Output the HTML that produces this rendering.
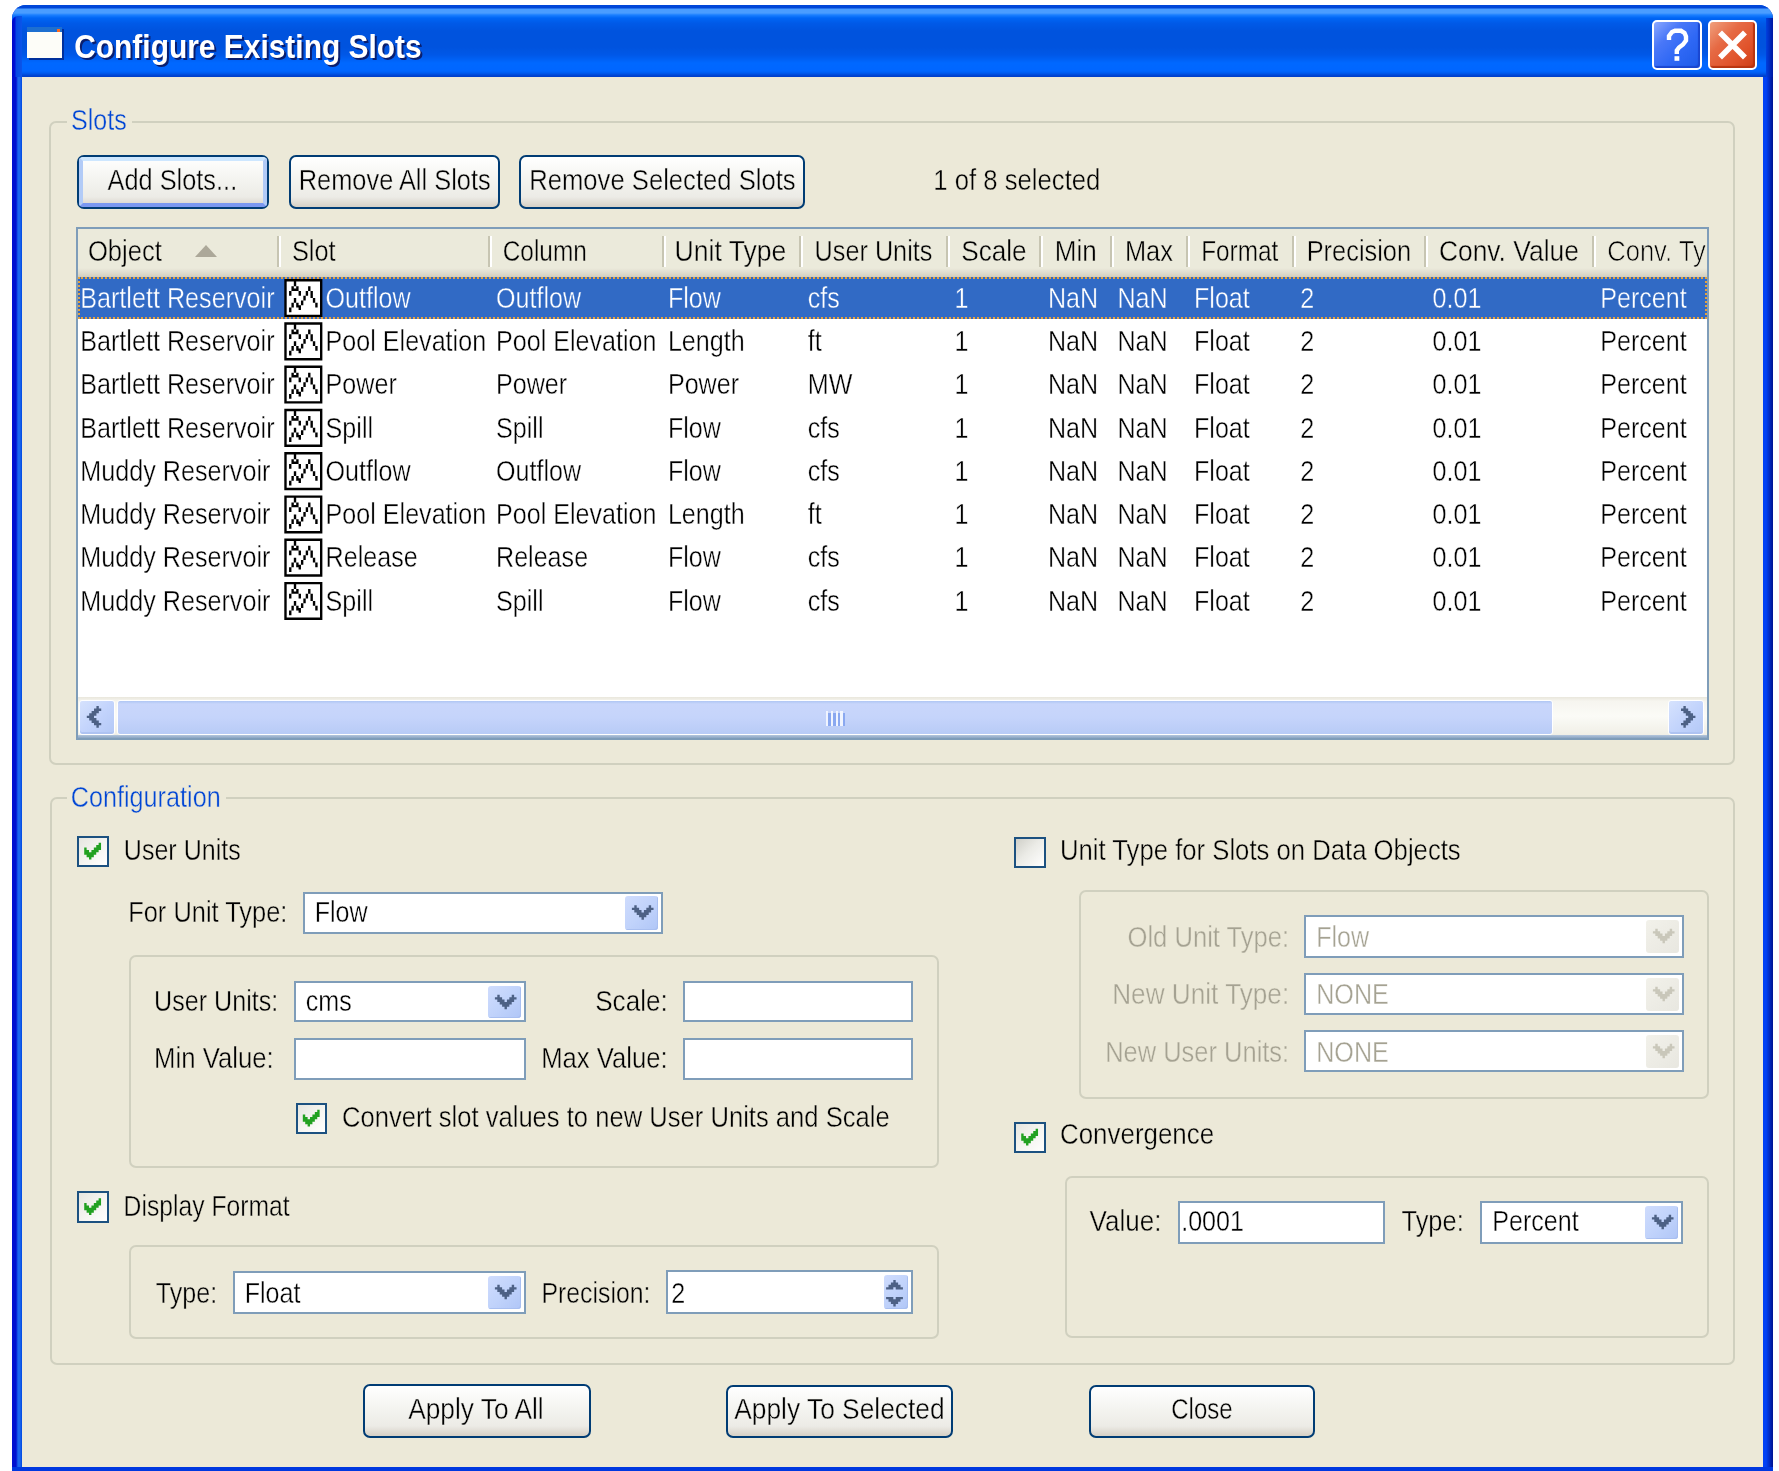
<!DOCTYPE html>
<html><head><meta charset="utf-8"><title>Configure Existing Slots</title>
<style>
html,body{margin:0;padding:0;background:#fff;width:1779px;height:1471px;overflow:hidden;position:relative;font-family:"Liberation Sans", sans-serif}
svg.ov{position:absolute;left:0;top:0;width:1779px;height:1471px;pointer-events:none}
svg.ov text{font-family:"Liberation Sans", sans-serif}
#wrap{position:absolute;left:0;top:0;width:1779px;height:1471px;filter:contrast(1)}
</style></head><body><div id="wrap">
<div style="position:absolute;left:12.0px;top:5.0px;width:1761.0px;height:1495.0px;background:linear-gradient(90deg,#0010d0 0,#0010d0 4px,#1a66ee 6px,#1a66ee 8px,#0048e0 10px,#0048e0 1751px,#0041f5 1751px,#0041f5 1754px,#00138f 1761px);border-radius:14px 14px 0 0;overflow:hidden"></div>
<div style="position:absolute;left:12.0px;top:5.0px;width:1761.0px;height:72.0px;background:linear-gradient(180deg,#0047d8 0px,#0047d8 3px,#4a9dff 4px,#4a9dff 8px,#1a7fff 10px,#0066f5 13px,#005ae8 18px,#0053de 26px,#0053de 42px,#0058e8 50px,#0068ff 58px,#0066ff 66px,#005cf0 68px,#0040cc 71px,#0040cc 72px);border-radius:14px 14px 0 0"></div>
<div style="position:absolute;left:12.0px;top:16.0px;width:10.0px;height:61.0px;background:linear-gradient(90deg,#0008c8 0,#0010d8 3px,#0648e0 4px,#0a55ea 10px);border-top-left-radius:6px"></div>
<div style="position:absolute;left:1766.0px;top:18.0px;width:7.0px;height:59.0px;background:linear-gradient(90deg,#0040e0,#0018a0)"></div>
<div style="position:absolute;left:22.0px;top:77.0px;width:1741.0px;height:1390.0px;background:#ece9d8"></div>
<div style="position:absolute;left:12.0px;top:1467.0px;width:1761.0px;height:4.0px;background:#0038e0"></div>
<div style="position:absolute;left:27.0px;top:27.0px;width:35.0px;height:31.0px;background:#fdfdf8;box-shadow:2px 2px 0 #00309c"></div>
<div style="position:absolute;left:27.0px;top:27.0px;width:35.0px;height:5.0px;background:#1d6fd0"></div>
<div style="position:absolute;left:57.0px;top:29.0px;width:3.0px;height:3.0px;background:#ff6a20"></div>
<div style="position:absolute;left:1652.0px;top:20.0px;width:50.0px;height:50.0px;border:2.4px solid #fff;border-radius:5px;box-sizing:border-box;background:linear-gradient(135deg,#8aa8ff 0%,#4a78f8 30%,#2f68f5 60%,#1d5ae8 100%);box-shadow:inset -2px -2px 1px #1a46d0"></div>
<div style="position:absolute;left:1708.0px;top:20.0px;width:49.0px;height:50.0px;border:2.4px solid #fff;border-radius:5px;box-sizing:border-box;background:linear-gradient(135deg,#f0a07e 0%,#e66a44 35%,#e0522a 70%,#cc3d14 100%);box-shadow:inset -2px -2px 1px #b83510"></div>
<div style="position:absolute;left:49.0px;top:121.0px;width:1686.0px;height:644.0px;border:2px solid #d0d0bf;border-radius:7px;box-sizing:border-box"></div>
<div style="position:absolute;left:66.7px;top:118.0px;width:65.3px;height:7.0px;background:#ece9d8"></div>
<div style="position:absolute;left:50.0px;top:797.0px;width:1685.0px;height:568.0px;border:2px solid #d0d0bf;border-radius:7px;box-sizing:border-box"></div>
<div style="position:absolute;left:66.5px;top:794.0px;width:159.5px;height:7.0px;background:#ece9d8"></div>
<div style="position:absolute;left:77.0px;top:155.0px;width:192.0px;height:54.0px;border:2.4px solid #003c74;border-radius:7px;box-sizing:border-box;background:linear-gradient(180deg,#ffffff 0%,#f4f4f0 45%,#ecebe6 80%,#d6d0c5 100%)"></div>
<div style="position:absolute;left:79.4px;top:157.4px;width:187.2px;height:49.2px;border:4px solid;border-color:#cee7ff #b2cbf7 #7b98f0 #b2cbf7;border-radius:4px;box-sizing:border-box"></div>
<div style="position:absolute;left:289.0px;top:155.0px;width:211.0px;height:54.0px;border:2.4px solid #003c74;border-radius:7px;box-sizing:border-box;background:linear-gradient(180deg,#ffffff 0%,#f4f4f0 45%,#ecebe6 80%,#d6d0c5 100%)"></div>
<div style="position:absolute;left:519.0px;top:155.0px;width:286.0px;height:54.0px;border:2.4px solid #003c74;border-radius:7px;box-sizing:border-box;background:linear-gradient(180deg,#ffffff 0%,#f4f4f0 45%,#ecebe6 80%,#d6d0c5 100%)"></div>
<div style="position:absolute;left:76.0px;top:227.0px;width:1633.0px;height:513.0px;border:2.4px solid #7f9db9;box-sizing:border-box;background:#fff"></div>
<div style="position:absolute;left:78.4px;top:229.4px;width:1628.2px;height:47.6px;background:linear-gradient(180deg,#ebeadb 0,#ebeadb 39px,#e4e1d3 42px,#dcd8c9 45px,#d2cebf 47.6px)"></div>
<div style="position:absolute;left:276.7px;top:236.0px;width:2.0px;height:31.0px;background:#c7c5b2"></div>
<div style="position:absolute;left:278.7px;top:236.0px;width:2.2px;height:31.0px;background:#fff"></div>
<div style="position:absolute;left:488.0px;top:236.0px;width:2.0px;height:31.0px;background:#c7c5b2"></div>
<div style="position:absolute;left:490.0px;top:236.0px;width:2.2px;height:31.0px;background:#fff"></div>
<div style="position:absolute;left:661.6px;top:236.0px;width:2.0px;height:31.0px;background:#c7c5b2"></div>
<div style="position:absolute;left:663.6px;top:236.0px;width:2.2px;height:31.0px;background:#fff"></div>
<div style="position:absolute;left:799.2px;top:236.0px;width:2.0px;height:31.0px;background:#c7c5b2"></div>
<div style="position:absolute;left:801.2px;top:236.0px;width:2.2px;height:31.0px;background:#fff"></div>
<div style="position:absolute;left:945.6px;top:236.0px;width:2.0px;height:31.0px;background:#c7c5b2"></div>
<div style="position:absolute;left:947.6px;top:236.0px;width:2.2px;height:31.0px;background:#fff"></div>
<div style="position:absolute;left:1039.3px;top:236.0px;width:2.0px;height:31.0px;background:#c7c5b2"></div>
<div style="position:absolute;left:1041.3px;top:236.0px;width:2.2px;height:31.0px;background:#fff"></div>
<div style="position:absolute;left:1109.5px;top:236.0px;width:2.0px;height:31.0px;background:#c7c5b2"></div>
<div style="position:absolute;left:1111.5px;top:236.0px;width:2.2px;height:31.0px;background:#fff"></div>
<div style="position:absolute;left:1186.0px;top:236.0px;width:2.0px;height:31.0px;background:#c7c5b2"></div>
<div style="position:absolute;left:1188.0px;top:236.0px;width:2.2px;height:31.0px;background:#fff"></div>
<div style="position:absolute;left:1292.0px;top:236.0px;width:2.0px;height:31.0px;background:#c7c5b2"></div>
<div style="position:absolute;left:1294.0px;top:236.0px;width:2.2px;height:31.0px;background:#fff"></div>
<div style="position:absolute;left:1424.0px;top:236.0px;width:2.0px;height:31.0px;background:#c7c5b2"></div>
<div style="position:absolute;left:1426.0px;top:236.0px;width:2.2px;height:31.0px;background:#fff"></div>
<div style="position:absolute;left:1592.0px;top:236.0px;width:2.0px;height:31.0px;background:#c7c5b2"></div>
<div style="position:absolute;left:1594.0px;top:236.0px;width:2.2px;height:31.0px;background:#fff"></div>
<div style="position:absolute;left:78.4px;top:277.0px;width:1628.2px;height:41.8px;background:#316ac5;outline:2px dotted #e7a23c;outline-offset:-2px"></div>
<div style="position:absolute;left:78.4px;top:697.0px;width:1628.2px;height:38.0px;background:linear-gradient(180deg,#e9e7dc 0,#f6f5ef 4px,#fbfbf7 50%,#f0efe6 100%)"></div>
<div style="position:absolute;left:78.4px;top:735.0px;width:1628.2px;height:2.6px;background:linear-gradient(180deg,#b4c6dc,#8ba5c3)"></div>
<div style="position:absolute;left:79.0px;top:700.0px;width:36.0px;height:35.0px;border:1.5px solid #fff;box-sizing:border-box;border-radius:3px;background:linear-gradient(135deg,#d6e2fd 0%,#c3d4fc 50%,#b3c8f6 100%);box-shadow:inset 0 -2px 0 #aec3f2"></div>
<div style="position:absolute;left:1668.0px;top:700.0px;width:36.0px;height:35.0px;border:1.5px solid #fff;box-sizing:border-box;border-radius:3px;background:linear-gradient(135deg,#d6e2fd 0%,#c3d4fc 50%,#b3c8f6 100%);box-shadow:inset 0 -2px 0 #aec3f2"></div>
<div style="position:absolute;left:117.0px;top:700.0px;width:1436.0px;height:35.0px;border:1.5px solid #fff;box-sizing:border-box;border-radius:3px;background:linear-gradient(180deg,#afc6f3 0,#c9d6fb 3px,#c5d4fb 50%,#b8cbf6 100%)"></div>
<div style="position:absolute;left:826.0px;top:711.0px;width:2.4px;height:15.0px;background:#f0f4ff"></div>
<div style="position:absolute;left:828.4px;top:713.0px;width:2.4px;height:13.0px;background:#8aa8f0"></div>
<div style="position:absolute;left:830.8px;top:711.0px;width:2.4px;height:15.0px;background:#f0f4ff"></div>
<div style="position:absolute;left:833.2px;top:713.0px;width:2.4px;height:13.0px;background:#8aa8f0"></div>
<div style="position:absolute;left:835.6px;top:711.0px;width:2.4px;height:15.0px;background:#f0f4ff"></div>
<div style="position:absolute;left:838.0px;top:713.0px;width:2.4px;height:13.0px;background:#8aa8f0"></div>
<div style="position:absolute;left:840.4px;top:711.0px;width:2.4px;height:15.0px;background:#f0f4ff"></div>
<div style="position:absolute;left:842.8px;top:713.0px;width:2.4px;height:13.0px;background:#8aa8f0"></div>
<div style="position:absolute;left:77.0px;top:835.5px;width:31.5px;height:31.5px;border:2.4px solid #1c5180;box-sizing:border-box;background:linear-gradient(135deg,#e6e6e0 0%,#f4f4f0 50%,#ffffff 100%)"></div>
<div style="position:absolute;left:303.4px;top:891.5px;width:359.6px;height:42.5px;border:2.4px solid #7f9db9;box-sizing:border-box;background:#fff"></div>
<div style="position:absolute;left:624.8px;top:896.0px;width:33.2px;height:33.7px;border-radius:3px;background:linear-gradient(135deg,#cfdcfd 0%,#c1d3fb 50%,#b0c6f7 100%);box-shadow:inset -1px -1px 0 #a9bff0"></div>
<div style="position:absolute;left:129.0px;top:955.0px;width:810.0px;height:213.0px;border:2px solid #d0d0bf;border-radius:7px;box-sizing:border-box"></div>
<div style="position:absolute;left:294.0px;top:981.0px;width:232.0px;height:41.0px;border:2.4px solid #7f9db9;box-sizing:border-box;background:#fff"></div>
<div style="position:absolute;left:487.8px;top:985.5px;width:33.2px;height:32.2px;border-radius:3px;background:linear-gradient(135deg,#cfdcfd 0%,#c1d3fb 50%,#b0c6f7 100%);box-shadow:inset -1px -1px 0 #a9bff0"></div>
<div style="position:absolute;left:682.7px;top:981.0px;width:230.3px;height:41.0px;border:2.4px solid #7f9db9;box-sizing:border-box;background:#fff"></div>
<div style="position:absolute;left:294.0px;top:1038.2px;width:232.0px;height:41.8px;border:2.4px solid #7f9db9;box-sizing:border-box;background:#fff"></div>
<div style="position:absolute;left:682.7px;top:1038.2px;width:230.3px;height:41.8px;border:2.4px solid #7f9db9;box-sizing:border-box;background:#fff"></div>
<div style="position:absolute;left:295.6px;top:1102.5px;width:31.5px;height:31.5px;border:2.4px solid #1c5180;box-sizing:border-box;background:linear-gradient(135deg,#e6e6e0 0%,#f4f4f0 50%,#ffffff 100%)"></div>
<div style="position:absolute;left:77.0px;top:1191.0px;width:31.5px;height:31.5px;border:2.4px solid #1c5180;box-sizing:border-box;background:linear-gradient(135deg,#e6e6e0 0%,#f4f4f0 50%,#ffffff 100%)"></div>
<div style="position:absolute;left:128.5px;top:1245.0px;width:810.5px;height:94.0px;border:2px solid #d0d0bf;border-radius:7px;box-sizing:border-box"></div>
<div style="position:absolute;left:233.4px;top:1271.0px;width:292.6px;height:42.5px;border:2.4px solid #7f9db9;box-sizing:border-box;background:#fff"></div>
<div style="position:absolute;left:487.8px;top:1275.5px;width:33.2px;height:33.7px;border-radius:3px;background:linear-gradient(135deg,#cfdcfd 0%,#c1d3fb 50%,#b0c6f7 100%);box-shadow:inset -1px -1px 0 #a9bff0"></div>
<div style="position:absolute;left:665.6px;top:1270.0px;width:247.4px;height:43.5px;border:2.4px solid #7f9db9;box-sizing:border-box;background:#fff"></div>
<div style="position:absolute;left:884.0px;top:1275.0px;width:24.0px;height:33.9px;border-radius:3px;background:linear-gradient(135deg,#cfdcfd 0%,#c1d3fb 50%,#b0c6f7 100%);box-shadow:inset -1px -1px 0 #a9bff0"></div>
<div style="position:absolute;left:1014.0px;top:836.5px;width:31.5px;height:31.5px;border:2.4px solid #1c5180;box-sizing:border-box;background:linear-gradient(135deg,#cfcfc8 0%,#ebebe6 45%,#ffffff 100%)"></div>
<div style="position:absolute;left:1079.4px;top:889.6px;width:629.6px;height:209.4px;border:2px solid #d0d0bf;border-radius:7px;box-sizing:border-box"></div>
<div style="position:absolute;left:1304.0px;top:915.0px;width:380.0px;height:42.5px;border:2.4px solid #7f9db9;box-sizing:border-box;background:#fff"></div>
<div style="position:absolute;left:1645.8px;top:919.5px;width:33.2px;height:33.7px;border-radius:3px;background:linear-gradient(135deg,#f2f1ea 0%,#e8e7e0 100%)"></div>
<div style="position:absolute;left:1304.0px;top:973.0px;width:380.0px;height:42.0px;border:2.4px solid #7f9db9;box-sizing:border-box;background:#fff"></div>
<div style="position:absolute;left:1645.8px;top:977.5px;width:33.2px;height:33.2px;border-radius:3px;background:linear-gradient(135deg,#f2f1ea 0%,#e8e7e0 100%)"></div>
<div style="position:absolute;left:1304.0px;top:1030.0px;width:380.0px;height:42.2px;border:2.4px solid #7f9db9;box-sizing:border-box;background:#fff"></div>
<div style="position:absolute;left:1645.8px;top:1034.5px;width:33.2px;height:33.4px;border-radius:3px;background:linear-gradient(135deg,#f2f1ea 0%,#e8e7e0 100%)"></div>
<div style="position:absolute;left:1014.0px;top:1121.5px;width:31.5px;height:31.5px;border:2.4px solid #1c5180;box-sizing:border-box;background:linear-gradient(135deg,#e6e6e0 0%,#f4f4f0 50%,#ffffff 100%)"></div>
<div style="position:absolute;left:1064.6px;top:1175.9px;width:644.4px;height:162.6px;border:2px solid #d0d0bf;border-radius:7px;box-sizing:border-box"></div>
<div style="position:absolute;left:1177.6px;top:1201.0px;width:207.9px;height:42.5px;border:2.4px solid #7f9db9;box-sizing:border-box;background:#fff"></div>
<div style="position:absolute;left:1479.9px;top:1201.0px;width:203.1px;height:42.5px;border:2.4px solid #7f9db9;box-sizing:border-box;background:#fff"></div>
<div style="position:absolute;left:1644.8px;top:1205.5px;width:33.2px;height:33.7px;border-radius:3px;background:linear-gradient(135deg,#cfdcfd 0%,#c1d3fb 50%,#b0c6f7 100%);box-shadow:inset -1px -1px 0 #a9bff0"></div>
<div style="position:absolute;left:363.0px;top:1384.0px;width:228.0px;height:53.5px;border:2.4px solid #003c74;border-radius:7px;box-sizing:border-box;background:linear-gradient(180deg,#ffffff 0%,#f4f4f0 45%,#ecebe6 80%,#d6d0c5 100%)"></div>
<div style="position:absolute;left:725.9px;top:1384.5px;width:227.1px;height:53.0px;border:2.4px solid #003c74;border-radius:7px;box-sizing:border-box;background:linear-gradient(180deg,#ffffff 0%,#f4f4f0 45%,#ecebe6 80%,#d6d0c5 100%)"></div>
<div style="position:absolute;left:1088.5px;top:1384.5px;width:226.5px;height:53.0px;border:2.4px solid #003c74;border-radius:7px;box-sizing:border-box;background:linear-gradient(180deg,#ffffff 0%,#f4f4f0 45%,#ecebe6 80%,#d6d0c5 100%)"></div>
<svg class="ov" width="1779" height="1471" viewBox="0 0 1779 1471">
<text x="76.2" y="60.3" textLength="347.5" lengthAdjust="spacingAndGlyphs" font-size="32.5" fill="#0a1e6e" font-weight="bold" >Configure Existing Slots</text>
<text x="74.2" y="58.3" textLength="347.5" lengthAdjust="spacingAndGlyphs" font-size="32.5" fill="#fff" font-weight="bold" >Configure Existing Slots</text>
<path d="M1669 40 L1669 36 L1672 32 L1675 30.8 L1681 30.8 L1684.5 33 L1686 36.5 L1686 40.5 L1683 44.5 L1679 47.5 L1676.8 50.5 L1676.8 54" fill="none" stroke="#fff" stroke-width="4.4" stroke-linejoin="miter"/><rect x="1674.5" y="56.2" width="4.8" height="4.6" fill="#fff"/>
<path d="M1722 34.5 L1743 55.5 M1743 34.5 L1722 55.5" stroke="#fff" stroke-width="5.6" stroke-linecap="square"/>
<text x="70.9" y="130.0" textLength="55.8" lengthAdjust="spacingAndGlyphs" font-size="29" fill="#0046d5" font-weight="normal"  stroke="#ece9d8" stroke-width="0.4">Slots</text>
<text x="70.7" y="807.0" textLength="150.0" lengthAdjust="spacingAndGlyphs" font-size="29" fill="#0046d5" font-weight="normal"  stroke="#ece9d8" stroke-width="0.4">Configuration</text>
<text x="107.5" y="190.3" textLength="129.7" lengthAdjust="spacingAndGlyphs" font-size="29" fill="#000" font-weight="normal"  stroke="#f1f1ec" stroke-width="0.4">Add Slots...</text>
<text x="298.7" y="190.3" textLength="192.0" lengthAdjust="spacingAndGlyphs" font-size="29" fill="#000" font-weight="normal"  stroke="#f1f1ec" stroke-width="0.4">Remove All Slots</text>
<text x="529.2" y="190.3" textLength="266.5" lengthAdjust="spacingAndGlyphs" font-size="29" fill="#000" font-weight="normal"  stroke="#f1f1ec" stroke-width="0.4">Remove Selected Slots</text>
<text x="933.2" y="189.8" textLength="167.2" lengthAdjust="spacingAndGlyphs" font-size="29" fill="#000" font-weight="normal"  stroke="#ece9d8" stroke-width="0.4">1 of 8 selected</text>
<text x="87.9" y="261.3" textLength="74.0" lengthAdjust="spacingAndGlyphs" font-size="29" fill="#000" font-weight="normal"  stroke="#ebeadb" stroke-width="0.4">Object</text>
<text x="291.9" y="261.3" textLength="43.7" lengthAdjust="spacingAndGlyphs" font-size="29" fill="#000" font-weight="normal"  stroke="#ebeadb" stroke-width="0.4">Slot</text>
<text x="502.7" y="261.3" textLength="84.1" lengthAdjust="spacingAndGlyphs" font-size="29" fill="#000" font-weight="normal"  stroke="#ebeadb" stroke-width="0.4">Column</text>
<text x="674.6" y="261.3" textLength="111.8" lengthAdjust="spacingAndGlyphs" font-size="29" fill="#000" font-weight="normal"  stroke="#ebeadb" stroke-width="0.4">Unit Type</text>
<text x="814.6" y="261.3" textLength="117.8" lengthAdjust="spacingAndGlyphs" font-size="29" fill="#000" font-weight="normal"  stroke="#ebeadb" stroke-width="0.4">User Units</text>
<text x="961.2" y="261.3" textLength="65.5" lengthAdjust="spacingAndGlyphs" font-size="29" fill="#000" font-weight="normal"  stroke="#ebeadb" stroke-width="0.4">Scale</text>
<text x="1054.7" y="261.3" textLength="42.0" lengthAdjust="spacingAndGlyphs" font-size="29" fill="#000" font-weight="normal"  stroke="#ebeadb" stroke-width="0.4">Min</text>
<text x="1124.9" y="261.3" textLength="48.0" lengthAdjust="spacingAndGlyphs" font-size="29" fill="#000" font-weight="normal"  stroke="#ebeadb" stroke-width="0.4">Max</text>
<text x="1201.2" y="261.3" textLength="77.1" lengthAdjust="spacingAndGlyphs" font-size="29" fill="#000" font-weight="normal"  stroke="#ebeadb" stroke-width="0.4">Format</text>
<text x="1306.7" y="261.3" textLength="104.4" lengthAdjust="spacingAndGlyphs" font-size="29" fill="#000" font-weight="normal"  stroke="#ebeadb" stroke-width="0.4">Precision</text>
<text x="1438.9" y="261.3" textLength="140.0" lengthAdjust="spacingAndGlyphs" font-size="29" fill="#000" font-weight="normal"  stroke="#ebeadb" stroke-width="0.4">Conv. Value</text>
<svg x="1600" y="229" width="106" height="48"><text x="7.2" y="32.3" textLength="127" lengthAdjust="spacingAndGlyphs" font-size="29" stroke="#ebeadb" stroke-width="0.7">Conv. Type</text></svg>
<path d="M195 257 L206 245 L217 257 Z" fill="#aca899"/>
<text x="80.2" y="307.7" textLength="194.4" lengthAdjust="spacingAndGlyphs" font-size="29" fill="#fff" font-weight="normal"  stroke="#316ac5" stroke-width="0.4">Bartlett Reservoir</text>
<rect x="285.3" y="280.2" width="35.7" height="35.7" fill="#fff"/>
<path transform="translate(284.3 279.0) scale(2.38)" d="M4 0h1v1h-1zM4 9h1v1h-1zM8 0h1v1h-1zM5 10h1v1h-1zM0 5h1v1h-1zM11 5h1v1h-1zM0 14h1v1h-1zM15 5h1v1h-1zM1 15h1v1h-1zM15 14h1v1h-1zM6 11h1v1h-1zM7 10h1v1h-1zM4 2h1v1h-1zM5 3h1v1h-1zM3 15h1v1h-1zM14 15h1v1h-1zM0 7h1v1h-1zM11 7h1v1h-1zM13 10h1v1h-1zM15 7h1v1h-1zM0 0h1v1h-1zM11 0h1v1h-1zM0 9h1v1h-1zM15 0h1v1h-1zM15 9h1v1h-1zM6 6h1v1h-1zM3 10h1v1h-1zM9 5h1v1h-1zM0 2h1v1h-1zM15 2h1v1h-1zM10 15h1v1h-1zM15 11h1v1h-1zM3 3h1v1h-1zM5 0h1v1h-1zM12 15h1v1h-1zM15 4h1v1h-1zM7 0h1v1h-1zM15 13h1v1h-1zM2 13h1v1h-1zM7 9h1v1h-1zM12 8h1v1h-1zM4 4h1v1h-1zM9 0h1v1h-1zM5 11h1v1h-1zM13 0h1v1h-1zM15 6h1v1h-1zM2 6h1v1h-1zM2 15h1v1h-1zM6 15h1v1h-1zM5 4h1v1h-1zM4 15h1v1h-1zM10 3h1v1h-1zM1 0h1v1h-1zM8 15h1v1h-1zM13 11h1v1h-1zM0 11h1v1h-1zM3 0h1v1h-1zM14 0h1v1h-1zM4 8h1v1h-1zM8 8h1v1h-1zM0 4h1v1h-1zM0 13h1v1h-1zM4 1h1v1h-1zM3 11h1v1h-1zM11 6h1v1h-1zM0 6h1v1h-1zM0 15h1v1h-1zM11 15h1v1h-1zM2 12h1v1h-1zM15 15h1v1h-1zM6 12h1v1h-1zM3 4h1v1h-1zM10 0h1v1h-1zM0 8h1v1h-1zM2 5h1v1h-1zM15 8h1v1h-1zM6 5h1v1h-1zM12 0h1v1h-1zM12 9h1v1h-1zM0 1h1v1h-1zM5 15h1v1h-1zM0 10h1v1h-1zM15 1h1v1h-1zM15 10h1v1h-1zM7 15h1v1h-1zM8 7h1v1h-1zM10 4h1v1h-1zM9 6h1v1h-1zM0 3h1v1h-1zM2 0h1v1h-1zM9 15h1v1h-1zM0 12h1v1h-1zM15 3h1v1h-1zM6 0h1v1h-1zM13 15h1v1h-1zM15 12h1v1h-1z" fill="#000"/>
<text x="325.6" y="307.7" textLength="85.1" lengthAdjust="spacingAndGlyphs" font-size="29" fill="#fff" font-weight="normal"  stroke="#316ac5" stroke-width="0.4">Outflow</text>
<text x="496.0" y="307.7" textLength="85.1" lengthAdjust="spacingAndGlyphs" font-size="29" fill="#fff" font-weight="normal"  stroke="#316ac5" stroke-width="0.4">Outflow</text>
<text x="667.9" y="307.7" textLength="53.0" lengthAdjust="spacingAndGlyphs" font-size="29" fill="#fff" font-weight="normal"  stroke="#316ac5" stroke-width="0.4">Flow</text>
<text x="807.8" y="307.7" textLength="32.1" lengthAdjust="spacingAndGlyphs" font-size="29" fill="#fff" font-weight="normal"  stroke="#316ac5" stroke-width="0.4">cfs</text>
<text x="954.5" y="307.7" textLength="14.0" lengthAdjust="spacingAndGlyphs" font-size="29" fill="#fff" font-weight="normal"  stroke="#316ac5" stroke-width="0.4">1</text>
<text x="1048.0" y="307.7" textLength="50.2" lengthAdjust="spacingAndGlyphs" font-size="29" fill="#fff" font-weight="normal"  stroke="#316ac5" stroke-width="0.4">NaN</text>
<text x="1117.4" y="307.7" textLength="50.2" lengthAdjust="spacingAndGlyphs" font-size="29" fill="#fff" font-weight="normal"  stroke="#316ac5" stroke-width="0.4">NaN</text>
<text x="1194.0" y="307.7" textLength="55.8" lengthAdjust="spacingAndGlyphs" font-size="29" fill="#fff" font-weight="normal"  stroke="#316ac5" stroke-width="0.4">Float</text>
<text x="1300.2" y="307.7" textLength="14.0" lengthAdjust="spacingAndGlyphs" font-size="29" fill="#fff" font-weight="normal"  stroke="#316ac5" stroke-width="0.4">2</text>
<text x="1432.6" y="307.7" textLength="48.9" lengthAdjust="spacingAndGlyphs" font-size="29" fill="#fff" font-weight="normal"  stroke="#316ac5" stroke-width="0.4">0.01</text>
<text x="1600.2" y="307.7" textLength="86.5" lengthAdjust="spacingAndGlyphs" font-size="29" fill="#fff" font-weight="normal"  stroke="#316ac5" stroke-width="0.4">Percent</text>
<text x="80.2" y="351.0" textLength="194.4" lengthAdjust="spacingAndGlyphs" font-size="29" fill="#000" font-weight="normal"  stroke="#fff" stroke-width="0.4">Bartlett Reservoir</text>
<rect x="285.3" y="323.5" width="35.7" height="35.7" fill="#fff"/>
<path transform="translate(284.3 322.3) scale(2.38)" d="M4 0h1v1h-1zM4 9h1v1h-1zM8 0h1v1h-1zM5 10h1v1h-1zM0 5h1v1h-1zM11 5h1v1h-1zM0 14h1v1h-1zM15 5h1v1h-1zM1 15h1v1h-1zM15 14h1v1h-1zM6 11h1v1h-1zM7 10h1v1h-1zM4 2h1v1h-1zM5 3h1v1h-1zM3 15h1v1h-1zM14 15h1v1h-1zM0 7h1v1h-1zM11 7h1v1h-1zM13 10h1v1h-1zM15 7h1v1h-1zM0 0h1v1h-1zM11 0h1v1h-1zM0 9h1v1h-1zM15 0h1v1h-1zM15 9h1v1h-1zM6 6h1v1h-1zM3 10h1v1h-1zM9 5h1v1h-1zM0 2h1v1h-1zM15 2h1v1h-1zM10 15h1v1h-1zM15 11h1v1h-1zM3 3h1v1h-1zM5 0h1v1h-1zM12 15h1v1h-1zM15 4h1v1h-1zM7 0h1v1h-1zM15 13h1v1h-1zM2 13h1v1h-1zM7 9h1v1h-1zM12 8h1v1h-1zM4 4h1v1h-1zM9 0h1v1h-1zM5 11h1v1h-1zM13 0h1v1h-1zM15 6h1v1h-1zM2 6h1v1h-1zM2 15h1v1h-1zM6 15h1v1h-1zM5 4h1v1h-1zM4 15h1v1h-1zM10 3h1v1h-1zM1 0h1v1h-1zM8 15h1v1h-1zM13 11h1v1h-1zM0 11h1v1h-1zM3 0h1v1h-1zM14 0h1v1h-1zM4 8h1v1h-1zM8 8h1v1h-1zM0 4h1v1h-1zM0 13h1v1h-1zM4 1h1v1h-1zM3 11h1v1h-1zM11 6h1v1h-1zM0 6h1v1h-1zM0 15h1v1h-1zM11 15h1v1h-1zM2 12h1v1h-1zM15 15h1v1h-1zM6 12h1v1h-1zM3 4h1v1h-1zM10 0h1v1h-1zM0 8h1v1h-1zM2 5h1v1h-1zM15 8h1v1h-1zM6 5h1v1h-1zM12 0h1v1h-1zM12 9h1v1h-1zM0 1h1v1h-1zM5 15h1v1h-1zM0 10h1v1h-1zM15 1h1v1h-1zM15 10h1v1h-1zM7 15h1v1h-1zM8 7h1v1h-1zM10 4h1v1h-1zM9 6h1v1h-1zM0 3h1v1h-1zM2 0h1v1h-1zM9 15h1v1h-1zM0 12h1v1h-1zM15 3h1v1h-1zM6 0h1v1h-1zM13 15h1v1h-1zM15 12h1v1h-1z" fill="#000"/>
<text x="325.6" y="351.0" textLength="160.5" lengthAdjust="spacingAndGlyphs" font-size="29" fill="#000" font-weight="normal"  stroke="#fff" stroke-width="0.4">Pool Elevation</text>
<text x="496.0" y="351.0" textLength="160.5" lengthAdjust="spacingAndGlyphs" font-size="29" fill="#000" font-weight="normal"  stroke="#fff" stroke-width="0.4">Pool Elevation</text>
<text x="667.9" y="351.0" textLength="76.8" lengthAdjust="spacingAndGlyphs" font-size="29" fill="#000" font-weight="normal"  stroke="#fff" stroke-width="0.4">Length</text>
<text x="807.8" y="351.0" textLength="14.0" lengthAdjust="spacingAndGlyphs" font-size="29" fill="#000" font-weight="normal"  stroke="#fff" stroke-width="0.4">ft</text>
<text x="954.5" y="351.0" textLength="14.0" lengthAdjust="spacingAndGlyphs" font-size="29" fill="#000" font-weight="normal"  stroke="#fff" stroke-width="0.4">1</text>
<text x="1048.0" y="351.0" textLength="50.2" lengthAdjust="spacingAndGlyphs" font-size="29" fill="#000" font-weight="normal"  stroke="#fff" stroke-width="0.4">NaN</text>
<text x="1117.4" y="351.0" textLength="50.2" lengthAdjust="spacingAndGlyphs" font-size="29" fill="#000" font-weight="normal"  stroke="#fff" stroke-width="0.4">NaN</text>
<text x="1194.0" y="351.0" textLength="55.8" lengthAdjust="spacingAndGlyphs" font-size="29" fill="#000" font-weight="normal"  stroke="#fff" stroke-width="0.4">Float</text>
<text x="1300.2" y="351.0" textLength="14.0" lengthAdjust="spacingAndGlyphs" font-size="29" fill="#000" font-weight="normal"  stroke="#fff" stroke-width="0.4">2</text>
<text x="1432.6" y="351.0" textLength="48.9" lengthAdjust="spacingAndGlyphs" font-size="29" fill="#000" font-weight="normal"  stroke="#fff" stroke-width="0.4">0.01</text>
<text x="1600.2" y="351.0" textLength="86.5" lengthAdjust="spacingAndGlyphs" font-size="29" fill="#000" font-weight="normal"  stroke="#fff" stroke-width="0.4">Percent</text>
<text x="80.2" y="394.2" textLength="194.4" lengthAdjust="spacingAndGlyphs" font-size="29" fill="#000" font-weight="normal"  stroke="#fff" stroke-width="0.4">Bartlett Reservoir</text>
<rect x="285.3" y="366.7" width="35.7" height="35.7" fill="#fff"/>
<path transform="translate(284.3 365.5) scale(2.38)" d="M4 0h1v1h-1zM4 9h1v1h-1zM8 0h1v1h-1zM5 10h1v1h-1zM0 5h1v1h-1zM11 5h1v1h-1zM0 14h1v1h-1zM15 5h1v1h-1zM1 15h1v1h-1zM15 14h1v1h-1zM6 11h1v1h-1zM7 10h1v1h-1zM4 2h1v1h-1zM5 3h1v1h-1zM3 15h1v1h-1zM14 15h1v1h-1zM0 7h1v1h-1zM11 7h1v1h-1zM13 10h1v1h-1zM15 7h1v1h-1zM0 0h1v1h-1zM11 0h1v1h-1zM0 9h1v1h-1zM15 0h1v1h-1zM15 9h1v1h-1zM6 6h1v1h-1zM3 10h1v1h-1zM9 5h1v1h-1zM0 2h1v1h-1zM15 2h1v1h-1zM10 15h1v1h-1zM15 11h1v1h-1zM3 3h1v1h-1zM5 0h1v1h-1zM12 15h1v1h-1zM15 4h1v1h-1zM7 0h1v1h-1zM15 13h1v1h-1zM2 13h1v1h-1zM7 9h1v1h-1zM12 8h1v1h-1zM4 4h1v1h-1zM9 0h1v1h-1zM5 11h1v1h-1zM13 0h1v1h-1zM15 6h1v1h-1zM2 6h1v1h-1zM2 15h1v1h-1zM6 15h1v1h-1zM5 4h1v1h-1zM4 15h1v1h-1zM10 3h1v1h-1zM1 0h1v1h-1zM8 15h1v1h-1zM13 11h1v1h-1zM0 11h1v1h-1zM3 0h1v1h-1zM14 0h1v1h-1zM4 8h1v1h-1zM8 8h1v1h-1zM0 4h1v1h-1zM0 13h1v1h-1zM4 1h1v1h-1zM3 11h1v1h-1zM11 6h1v1h-1zM0 6h1v1h-1zM0 15h1v1h-1zM11 15h1v1h-1zM2 12h1v1h-1zM15 15h1v1h-1zM6 12h1v1h-1zM3 4h1v1h-1zM10 0h1v1h-1zM0 8h1v1h-1zM2 5h1v1h-1zM15 8h1v1h-1zM6 5h1v1h-1zM12 0h1v1h-1zM12 9h1v1h-1zM0 1h1v1h-1zM5 15h1v1h-1zM0 10h1v1h-1zM15 1h1v1h-1zM15 10h1v1h-1zM7 15h1v1h-1zM8 7h1v1h-1zM10 4h1v1h-1zM9 6h1v1h-1zM0 3h1v1h-1zM2 0h1v1h-1zM9 15h1v1h-1zM0 12h1v1h-1zM15 3h1v1h-1zM6 0h1v1h-1zM13 15h1v1h-1zM15 12h1v1h-1z" fill="#000"/>
<text x="325.6" y="394.2" textLength="71.2" lengthAdjust="spacingAndGlyphs" font-size="29" fill="#000" font-weight="normal"  stroke="#fff" stroke-width="0.4">Power</text>
<text x="496.0" y="394.2" textLength="71.2" lengthAdjust="spacingAndGlyphs" font-size="29" fill="#000" font-weight="normal"  stroke="#fff" stroke-width="0.4">Power</text>
<text x="667.9" y="394.2" textLength="71.2" lengthAdjust="spacingAndGlyphs" font-size="29" fill="#000" font-weight="normal"  stroke="#fff" stroke-width="0.4">Power</text>
<text x="807.8" y="394.2" textLength="44.6" lengthAdjust="spacingAndGlyphs" font-size="29" fill="#000" font-weight="normal"  stroke="#fff" stroke-width="0.4">MW</text>
<text x="954.5" y="394.2" textLength="14.0" lengthAdjust="spacingAndGlyphs" font-size="29" fill="#000" font-weight="normal"  stroke="#fff" stroke-width="0.4">1</text>
<text x="1048.0" y="394.2" textLength="50.2" lengthAdjust="spacingAndGlyphs" font-size="29" fill="#000" font-weight="normal"  stroke="#fff" stroke-width="0.4">NaN</text>
<text x="1117.4" y="394.2" textLength="50.2" lengthAdjust="spacingAndGlyphs" font-size="29" fill="#000" font-weight="normal"  stroke="#fff" stroke-width="0.4">NaN</text>
<text x="1194.0" y="394.2" textLength="55.8" lengthAdjust="spacingAndGlyphs" font-size="29" fill="#000" font-weight="normal"  stroke="#fff" stroke-width="0.4">Float</text>
<text x="1300.2" y="394.2" textLength="14.0" lengthAdjust="spacingAndGlyphs" font-size="29" fill="#000" font-weight="normal"  stroke="#fff" stroke-width="0.4">2</text>
<text x="1432.6" y="394.2" textLength="48.9" lengthAdjust="spacingAndGlyphs" font-size="29" fill="#000" font-weight="normal"  stroke="#fff" stroke-width="0.4">0.01</text>
<text x="1600.2" y="394.2" textLength="86.5" lengthAdjust="spacingAndGlyphs" font-size="29" fill="#000" font-weight="normal"  stroke="#fff" stroke-width="0.4">Percent</text>
<text x="80.2" y="437.5" textLength="194.4" lengthAdjust="spacingAndGlyphs" font-size="29" fill="#000" font-weight="normal"  stroke="#fff" stroke-width="0.4">Bartlett Reservoir</text>
<rect x="285.3" y="410.0" width="35.7" height="35.7" fill="#fff"/>
<path transform="translate(284.3 408.8) scale(2.38)" d="M4 0h1v1h-1zM4 9h1v1h-1zM8 0h1v1h-1zM5 10h1v1h-1zM0 5h1v1h-1zM11 5h1v1h-1zM0 14h1v1h-1zM15 5h1v1h-1zM1 15h1v1h-1zM15 14h1v1h-1zM6 11h1v1h-1zM7 10h1v1h-1zM4 2h1v1h-1zM5 3h1v1h-1zM3 15h1v1h-1zM14 15h1v1h-1zM0 7h1v1h-1zM11 7h1v1h-1zM13 10h1v1h-1zM15 7h1v1h-1zM0 0h1v1h-1zM11 0h1v1h-1zM0 9h1v1h-1zM15 0h1v1h-1zM15 9h1v1h-1zM6 6h1v1h-1zM3 10h1v1h-1zM9 5h1v1h-1zM0 2h1v1h-1zM15 2h1v1h-1zM10 15h1v1h-1zM15 11h1v1h-1zM3 3h1v1h-1zM5 0h1v1h-1zM12 15h1v1h-1zM15 4h1v1h-1zM7 0h1v1h-1zM15 13h1v1h-1zM2 13h1v1h-1zM7 9h1v1h-1zM12 8h1v1h-1zM4 4h1v1h-1zM9 0h1v1h-1zM5 11h1v1h-1zM13 0h1v1h-1zM15 6h1v1h-1zM2 6h1v1h-1zM2 15h1v1h-1zM6 15h1v1h-1zM5 4h1v1h-1zM4 15h1v1h-1zM10 3h1v1h-1zM1 0h1v1h-1zM8 15h1v1h-1zM13 11h1v1h-1zM0 11h1v1h-1zM3 0h1v1h-1zM14 0h1v1h-1zM4 8h1v1h-1zM8 8h1v1h-1zM0 4h1v1h-1zM0 13h1v1h-1zM4 1h1v1h-1zM3 11h1v1h-1zM11 6h1v1h-1zM0 6h1v1h-1zM0 15h1v1h-1zM11 15h1v1h-1zM2 12h1v1h-1zM15 15h1v1h-1zM6 12h1v1h-1zM3 4h1v1h-1zM10 0h1v1h-1zM0 8h1v1h-1zM2 5h1v1h-1zM15 8h1v1h-1zM6 5h1v1h-1zM12 0h1v1h-1zM12 9h1v1h-1zM0 1h1v1h-1zM5 15h1v1h-1zM0 10h1v1h-1zM15 1h1v1h-1zM15 10h1v1h-1zM7 15h1v1h-1zM8 7h1v1h-1zM10 4h1v1h-1zM9 6h1v1h-1zM0 3h1v1h-1zM2 0h1v1h-1zM9 15h1v1h-1zM0 12h1v1h-1zM15 3h1v1h-1zM6 0h1v1h-1zM13 15h1v1h-1zM15 12h1v1h-1z" fill="#000"/>
<text x="325.6" y="437.5" textLength="47.5" lengthAdjust="spacingAndGlyphs" font-size="29" fill="#000" font-weight="normal"  stroke="#fff" stroke-width="0.4">Spill</text>
<text x="496.0" y="437.5" textLength="47.5" lengthAdjust="spacingAndGlyphs" font-size="29" fill="#000" font-weight="normal"  stroke="#fff" stroke-width="0.4">Spill</text>
<text x="667.9" y="437.5" textLength="53.0" lengthAdjust="spacingAndGlyphs" font-size="29" fill="#000" font-weight="normal"  stroke="#fff" stroke-width="0.4">Flow</text>
<text x="807.8" y="437.5" textLength="32.1" lengthAdjust="spacingAndGlyphs" font-size="29" fill="#000" font-weight="normal"  stroke="#fff" stroke-width="0.4">cfs</text>
<text x="954.5" y="437.5" textLength="14.0" lengthAdjust="spacingAndGlyphs" font-size="29" fill="#000" font-weight="normal"  stroke="#fff" stroke-width="0.4">1</text>
<text x="1048.0" y="437.5" textLength="50.2" lengthAdjust="spacingAndGlyphs" font-size="29" fill="#000" font-weight="normal"  stroke="#fff" stroke-width="0.4">NaN</text>
<text x="1117.4" y="437.5" textLength="50.2" lengthAdjust="spacingAndGlyphs" font-size="29" fill="#000" font-weight="normal"  stroke="#fff" stroke-width="0.4">NaN</text>
<text x="1194.0" y="437.5" textLength="55.8" lengthAdjust="spacingAndGlyphs" font-size="29" fill="#000" font-weight="normal"  stroke="#fff" stroke-width="0.4">Float</text>
<text x="1300.2" y="437.5" textLength="14.0" lengthAdjust="spacingAndGlyphs" font-size="29" fill="#000" font-weight="normal"  stroke="#fff" stroke-width="0.4">2</text>
<text x="1432.6" y="437.5" textLength="48.9" lengthAdjust="spacingAndGlyphs" font-size="29" fill="#000" font-weight="normal"  stroke="#fff" stroke-width="0.4">0.01</text>
<text x="1600.2" y="437.5" textLength="86.5" lengthAdjust="spacingAndGlyphs" font-size="29" fill="#000" font-weight="normal"  stroke="#fff" stroke-width="0.4">Percent</text>
<text x="80.2" y="480.8" textLength="190.2" lengthAdjust="spacingAndGlyphs" font-size="29" fill="#000" font-weight="normal"  stroke="#fff" stroke-width="0.4">Muddy Reservoir</text>
<rect x="285.3" y="453.3" width="35.7" height="35.7" fill="#fff"/>
<path transform="translate(284.3 452.1) scale(2.38)" d="M4 0h1v1h-1zM4 9h1v1h-1zM8 0h1v1h-1zM5 10h1v1h-1zM0 5h1v1h-1zM11 5h1v1h-1zM0 14h1v1h-1zM15 5h1v1h-1zM1 15h1v1h-1zM15 14h1v1h-1zM6 11h1v1h-1zM7 10h1v1h-1zM4 2h1v1h-1zM5 3h1v1h-1zM3 15h1v1h-1zM14 15h1v1h-1zM0 7h1v1h-1zM11 7h1v1h-1zM13 10h1v1h-1zM15 7h1v1h-1zM0 0h1v1h-1zM11 0h1v1h-1zM0 9h1v1h-1zM15 0h1v1h-1zM15 9h1v1h-1zM6 6h1v1h-1zM3 10h1v1h-1zM9 5h1v1h-1zM0 2h1v1h-1zM15 2h1v1h-1zM10 15h1v1h-1zM15 11h1v1h-1zM3 3h1v1h-1zM5 0h1v1h-1zM12 15h1v1h-1zM15 4h1v1h-1zM7 0h1v1h-1zM15 13h1v1h-1zM2 13h1v1h-1zM7 9h1v1h-1zM12 8h1v1h-1zM4 4h1v1h-1zM9 0h1v1h-1zM5 11h1v1h-1zM13 0h1v1h-1zM15 6h1v1h-1zM2 6h1v1h-1zM2 15h1v1h-1zM6 15h1v1h-1zM5 4h1v1h-1zM4 15h1v1h-1zM10 3h1v1h-1zM1 0h1v1h-1zM8 15h1v1h-1zM13 11h1v1h-1zM0 11h1v1h-1zM3 0h1v1h-1zM14 0h1v1h-1zM4 8h1v1h-1zM8 8h1v1h-1zM0 4h1v1h-1zM0 13h1v1h-1zM4 1h1v1h-1zM3 11h1v1h-1zM11 6h1v1h-1zM0 6h1v1h-1zM0 15h1v1h-1zM11 15h1v1h-1zM2 12h1v1h-1zM15 15h1v1h-1zM6 12h1v1h-1zM3 4h1v1h-1zM10 0h1v1h-1zM0 8h1v1h-1zM2 5h1v1h-1zM15 8h1v1h-1zM6 5h1v1h-1zM12 0h1v1h-1zM12 9h1v1h-1zM0 1h1v1h-1zM5 15h1v1h-1zM0 10h1v1h-1zM15 1h1v1h-1zM15 10h1v1h-1zM7 15h1v1h-1zM8 7h1v1h-1zM10 4h1v1h-1zM9 6h1v1h-1zM0 3h1v1h-1zM2 0h1v1h-1zM9 15h1v1h-1zM0 12h1v1h-1zM15 3h1v1h-1zM6 0h1v1h-1zM13 15h1v1h-1zM15 12h1v1h-1z" fill="#000"/>
<text x="325.6" y="480.8" textLength="85.1" lengthAdjust="spacingAndGlyphs" font-size="29" fill="#000" font-weight="normal"  stroke="#fff" stroke-width="0.4">Outflow</text>
<text x="496.0" y="480.8" textLength="85.1" lengthAdjust="spacingAndGlyphs" font-size="29" fill="#000" font-weight="normal"  stroke="#fff" stroke-width="0.4">Outflow</text>
<text x="667.9" y="480.8" textLength="53.0" lengthAdjust="spacingAndGlyphs" font-size="29" fill="#000" font-weight="normal"  stroke="#fff" stroke-width="0.4">Flow</text>
<text x="807.8" y="480.8" textLength="32.1" lengthAdjust="spacingAndGlyphs" font-size="29" fill="#000" font-weight="normal"  stroke="#fff" stroke-width="0.4">cfs</text>
<text x="954.5" y="480.8" textLength="14.0" lengthAdjust="spacingAndGlyphs" font-size="29" fill="#000" font-weight="normal"  stroke="#fff" stroke-width="0.4">1</text>
<text x="1048.0" y="480.8" textLength="50.2" lengthAdjust="spacingAndGlyphs" font-size="29" fill="#000" font-weight="normal"  stroke="#fff" stroke-width="0.4">NaN</text>
<text x="1117.4" y="480.8" textLength="50.2" lengthAdjust="spacingAndGlyphs" font-size="29" fill="#000" font-weight="normal"  stroke="#fff" stroke-width="0.4">NaN</text>
<text x="1194.0" y="480.8" textLength="55.8" lengthAdjust="spacingAndGlyphs" font-size="29" fill="#000" font-weight="normal"  stroke="#fff" stroke-width="0.4">Float</text>
<text x="1300.2" y="480.8" textLength="14.0" lengthAdjust="spacingAndGlyphs" font-size="29" fill="#000" font-weight="normal"  stroke="#fff" stroke-width="0.4">2</text>
<text x="1432.6" y="480.8" textLength="48.9" lengthAdjust="spacingAndGlyphs" font-size="29" fill="#000" font-weight="normal"  stroke="#fff" stroke-width="0.4">0.01</text>
<text x="1600.2" y="480.8" textLength="86.5" lengthAdjust="spacingAndGlyphs" font-size="29" fill="#000" font-weight="normal"  stroke="#fff" stroke-width="0.4">Percent</text>
<text x="80.2" y="524.0" textLength="190.2" lengthAdjust="spacingAndGlyphs" font-size="29" fill="#000" font-weight="normal"  stroke="#fff" stroke-width="0.4">Muddy Reservoir</text>
<rect x="285.3" y="496.6" width="35.7" height="35.7" fill="#fff"/>
<path transform="translate(284.3 495.4) scale(2.38)" d="M4 0h1v1h-1zM4 9h1v1h-1zM8 0h1v1h-1zM5 10h1v1h-1zM0 5h1v1h-1zM11 5h1v1h-1zM0 14h1v1h-1zM15 5h1v1h-1zM1 15h1v1h-1zM15 14h1v1h-1zM6 11h1v1h-1zM7 10h1v1h-1zM4 2h1v1h-1zM5 3h1v1h-1zM3 15h1v1h-1zM14 15h1v1h-1zM0 7h1v1h-1zM11 7h1v1h-1zM13 10h1v1h-1zM15 7h1v1h-1zM0 0h1v1h-1zM11 0h1v1h-1zM0 9h1v1h-1zM15 0h1v1h-1zM15 9h1v1h-1zM6 6h1v1h-1zM3 10h1v1h-1zM9 5h1v1h-1zM0 2h1v1h-1zM15 2h1v1h-1zM10 15h1v1h-1zM15 11h1v1h-1zM3 3h1v1h-1zM5 0h1v1h-1zM12 15h1v1h-1zM15 4h1v1h-1zM7 0h1v1h-1zM15 13h1v1h-1zM2 13h1v1h-1zM7 9h1v1h-1zM12 8h1v1h-1zM4 4h1v1h-1zM9 0h1v1h-1zM5 11h1v1h-1zM13 0h1v1h-1zM15 6h1v1h-1zM2 6h1v1h-1zM2 15h1v1h-1zM6 15h1v1h-1zM5 4h1v1h-1zM4 15h1v1h-1zM10 3h1v1h-1zM1 0h1v1h-1zM8 15h1v1h-1zM13 11h1v1h-1zM0 11h1v1h-1zM3 0h1v1h-1zM14 0h1v1h-1zM4 8h1v1h-1zM8 8h1v1h-1zM0 4h1v1h-1zM0 13h1v1h-1zM4 1h1v1h-1zM3 11h1v1h-1zM11 6h1v1h-1zM0 6h1v1h-1zM0 15h1v1h-1zM11 15h1v1h-1zM2 12h1v1h-1zM15 15h1v1h-1zM6 12h1v1h-1zM3 4h1v1h-1zM10 0h1v1h-1zM0 8h1v1h-1zM2 5h1v1h-1zM15 8h1v1h-1zM6 5h1v1h-1zM12 0h1v1h-1zM12 9h1v1h-1zM0 1h1v1h-1zM5 15h1v1h-1zM0 10h1v1h-1zM15 1h1v1h-1zM15 10h1v1h-1zM7 15h1v1h-1zM8 7h1v1h-1zM10 4h1v1h-1zM9 6h1v1h-1zM0 3h1v1h-1zM2 0h1v1h-1zM9 15h1v1h-1zM0 12h1v1h-1zM15 3h1v1h-1zM6 0h1v1h-1zM13 15h1v1h-1zM15 12h1v1h-1z" fill="#000"/>
<text x="325.6" y="524.0" textLength="160.5" lengthAdjust="spacingAndGlyphs" font-size="29" fill="#000" font-weight="normal"  stroke="#fff" stroke-width="0.4">Pool Elevation</text>
<text x="496.0" y="524.0" textLength="160.5" lengthAdjust="spacingAndGlyphs" font-size="29" fill="#000" font-weight="normal"  stroke="#fff" stroke-width="0.4">Pool Elevation</text>
<text x="667.9" y="524.0" textLength="76.8" lengthAdjust="spacingAndGlyphs" font-size="29" fill="#000" font-weight="normal"  stroke="#fff" stroke-width="0.4">Length</text>
<text x="807.8" y="524.0" textLength="14.0" lengthAdjust="spacingAndGlyphs" font-size="29" fill="#000" font-weight="normal"  stroke="#fff" stroke-width="0.4">ft</text>
<text x="954.5" y="524.0" textLength="14.0" lengthAdjust="spacingAndGlyphs" font-size="29" fill="#000" font-weight="normal"  stroke="#fff" stroke-width="0.4">1</text>
<text x="1048.0" y="524.0" textLength="50.2" lengthAdjust="spacingAndGlyphs" font-size="29" fill="#000" font-weight="normal"  stroke="#fff" stroke-width="0.4">NaN</text>
<text x="1117.4" y="524.0" textLength="50.2" lengthAdjust="spacingAndGlyphs" font-size="29" fill="#000" font-weight="normal"  stroke="#fff" stroke-width="0.4">NaN</text>
<text x="1194.0" y="524.0" textLength="55.8" lengthAdjust="spacingAndGlyphs" font-size="29" fill="#000" font-weight="normal"  stroke="#fff" stroke-width="0.4">Float</text>
<text x="1300.2" y="524.0" textLength="14.0" lengthAdjust="spacingAndGlyphs" font-size="29" fill="#000" font-weight="normal"  stroke="#fff" stroke-width="0.4">2</text>
<text x="1432.6" y="524.0" textLength="48.9" lengthAdjust="spacingAndGlyphs" font-size="29" fill="#000" font-weight="normal"  stroke="#fff" stroke-width="0.4">0.01</text>
<text x="1600.2" y="524.0" textLength="86.5" lengthAdjust="spacingAndGlyphs" font-size="29" fill="#000" font-weight="normal"  stroke="#fff" stroke-width="0.4">Percent</text>
<text x="80.2" y="567.3" textLength="190.2" lengthAdjust="spacingAndGlyphs" font-size="29" fill="#000" font-weight="normal"  stroke="#fff" stroke-width="0.4">Muddy Reservoir</text>
<rect x="285.3" y="539.8" width="35.7" height="35.7" fill="#fff"/>
<path transform="translate(284.3 538.6) scale(2.38)" d="M4 0h1v1h-1zM4 9h1v1h-1zM8 0h1v1h-1zM5 10h1v1h-1zM0 5h1v1h-1zM11 5h1v1h-1zM0 14h1v1h-1zM15 5h1v1h-1zM1 15h1v1h-1zM15 14h1v1h-1zM6 11h1v1h-1zM7 10h1v1h-1zM4 2h1v1h-1zM5 3h1v1h-1zM3 15h1v1h-1zM14 15h1v1h-1zM0 7h1v1h-1zM11 7h1v1h-1zM13 10h1v1h-1zM15 7h1v1h-1zM0 0h1v1h-1zM11 0h1v1h-1zM0 9h1v1h-1zM15 0h1v1h-1zM15 9h1v1h-1zM6 6h1v1h-1zM3 10h1v1h-1zM9 5h1v1h-1zM0 2h1v1h-1zM15 2h1v1h-1zM10 15h1v1h-1zM15 11h1v1h-1zM3 3h1v1h-1zM5 0h1v1h-1zM12 15h1v1h-1zM15 4h1v1h-1zM7 0h1v1h-1zM15 13h1v1h-1zM2 13h1v1h-1zM7 9h1v1h-1zM12 8h1v1h-1zM4 4h1v1h-1zM9 0h1v1h-1zM5 11h1v1h-1zM13 0h1v1h-1zM15 6h1v1h-1zM2 6h1v1h-1zM2 15h1v1h-1zM6 15h1v1h-1zM5 4h1v1h-1zM4 15h1v1h-1zM10 3h1v1h-1zM1 0h1v1h-1zM8 15h1v1h-1zM13 11h1v1h-1zM0 11h1v1h-1zM3 0h1v1h-1zM14 0h1v1h-1zM4 8h1v1h-1zM8 8h1v1h-1zM0 4h1v1h-1zM0 13h1v1h-1zM4 1h1v1h-1zM3 11h1v1h-1zM11 6h1v1h-1zM0 6h1v1h-1zM0 15h1v1h-1zM11 15h1v1h-1zM2 12h1v1h-1zM15 15h1v1h-1zM6 12h1v1h-1zM3 4h1v1h-1zM10 0h1v1h-1zM0 8h1v1h-1zM2 5h1v1h-1zM15 8h1v1h-1zM6 5h1v1h-1zM12 0h1v1h-1zM12 9h1v1h-1zM0 1h1v1h-1zM5 15h1v1h-1zM0 10h1v1h-1zM15 1h1v1h-1zM15 10h1v1h-1zM7 15h1v1h-1zM8 7h1v1h-1zM10 4h1v1h-1zM9 6h1v1h-1zM0 3h1v1h-1zM2 0h1v1h-1zM9 15h1v1h-1zM0 12h1v1h-1zM15 3h1v1h-1zM6 0h1v1h-1zM13 15h1v1h-1zM15 12h1v1h-1z" fill="#000"/>
<text x="325.6" y="567.3" textLength="92.1" lengthAdjust="spacingAndGlyphs" font-size="29" fill="#000" font-weight="normal"  stroke="#fff" stroke-width="0.4">Release</text>
<text x="496.0" y="567.3" textLength="92.1" lengthAdjust="spacingAndGlyphs" font-size="29" fill="#000" font-weight="normal"  stroke="#fff" stroke-width="0.4">Release</text>
<text x="667.9" y="567.3" textLength="53.0" lengthAdjust="spacingAndGlyphs" font-size="29" fill="#000" font-weight="normal"  stroke="#fff" stroke-width="0.4">Flow</text>
<text x="807.8" y="567.3" textLength="32.1" lengthAdjust="spacingAndGlyphs" font-size="29" fill="#000" font-weight="normal"  stroke="#fff" stroke-width="0.4">cfs</text>
<text x="954.5" y="567.3" textLength="14.0" lengthAdjust="spacingAndGlyphs" font-size="29" fill="#000" font-weight="normal"  stroke="#fff" stroke-width="0.4">1</text>
<text x="1048.0" y="567.3" textLength="50.2" lengthAdjust="spacingAndGlyphs" font-size="29" fill="#000" font-weight="normal"  stroke="#fff" stroke-width="0.4">NaN</text>
<text x="1117.4" y="567.3" textLength="50.2" lengthAdjust="spacingAndGlyphs" font-size="29" fill="#000" font-weight="normal"  stroke="#fff" stroke-width="0.4">NaN</text>
<text x="1194.0" y="567.3" textLength="55.8" lengthAdjust="spacingAndGlyphs" font-size="29" fill="#000" font-weight="normal"  stroke="#fff" stroke-width="0.4">Float</text>
<text x="1300.2" y="567.3" textLength="14.0" lengthAdjust="spacingAndGlyphs" font-size="29" fill="#000" font-weight="normal"  stroke="#fff" stroke-width="0.4">2</text>
<text x="1432.6" y="567.3" textLength="48.9" lengthAdjust="spacingAndGlyphs" font-size="29" fill="#000" font-weight="normal"  stroke="#fff" stroke-width="0.4">0.01</text>
<text x="1600.2" y="567.3" textLength="86.5" lengthAdjust="spacingAndGlyphs" font-size="29" fill="#000" font-weight="normal"  stroke="#fff" stroke-width="0.4">Percent</text>
<text x="80.2" y="610.6" textLength="190.2" lengthAdjust="spacingAndGlyphs" font-size="29" fill="#000" font-weight="normal"  stroke="#fff" stroke-width="0.4">Muddy Reservoir</text>
<rect x="285.3" y="583.1" width="35.7" height="35.7" fill="#fff"/>
<path transform="translate(284.3 581.9) scale(2.38)" d="M4 0h1v1h-1zM4 9h1v1h-1zM8 0h1v1h-1zM5 10h1v1h-1zM0 5h1v1h-1zM11 5h1v1h-1zM0 14h1v1h-1zM15 5h1v1h-1zM1 15h1v1h-1zM15 14h1v1h-1zM6 11h1v1h-1zM7 10h1v1h-1zM4 2h1v1h-1zM5 3h1v1h-1zM3 15h1v1h-1zM14 15h1v1h-1zM0 7h1v1h-1zM11 7h1v1h-1zM13 10h1v1h-1zM15 7h1v1h-1zM0 0h1v1h-1zM11 0h1v1h-1zM0 9h1v1h-1zM15 0h1v1h-1zM15 9h1v1h-1zM6 6h1v1h-1zM3 10h1v1h-1zM9 5h1v1h-1zM0 2h1v1h-1zM15 2h1v1h-1zM10 15h1v1h-1zM15 11h1v1h-1zM3 3h1v1h-1zM5 0h1v1h-1zM12 15h1v1h-1zM15 4h1v1h-1zM7 0h1v1h-1zM15 13h1v1h-1zM2 13h1v1h-1zM7 9h1v1h-1zM12 8h1v1h-1zM4 4h1v1h-1zM9 0h1v1h-1zM5 11h1v1h-1zM13 0h1v1h-1zM15 6h1v1h-1zM2 6h1v1h-1zM2 15h1v1h-1zM6 15h1v1h-1zM5 4h1v1h-1zM4 15h1v1h-1zM10 3h1v1h-1zM1 0h1v1h-1zM8 15h1v1h-1zM13 11h1v1h-1zM0 11h1v1h-1zM3 0h1v1h-1zM14 0h1v1h-1zM4 8h1v1h-1zM8 8h1v1h-1zM0 4h1v1h-1zM0 13h1v1h-1zM4 1h1v1h-1zM3 11h1v1h-1zM11 6h1v1h-1zM0 6h1v1h-1zM0 15h1v1h-1zM11 15h1v1h-1zM2 12h1v1h-1zM15 15h1v1h-1zM6 12h1v1h-1zM3 4h1v1h-1zM10 0h1v1h-1zM0 8h1v1h-1zM2 5h1v1h-1zM15 8h1v1h-1zM6 5h1v1h-1zM12 0h1v1h-1zM12 9h1v1h-1zM0 1h1v1h-1zM5 15h1v1h-1zM0 10h1v1h-1zM15 1h1v1h-1zM15 10h1v1h-1zM7 15h1v1h-1zM8 7h1v1h-1zM10 4h1v1h-1zM9 6h1v1h-1zM0 3h1v1h-1zM2 0h1v1h-1zM9 15h1v1h-1zM0 12h1v1h-1zM15 3h1v1h-1zM6 0h1v1h-1zM13 15h1v1h-1zM15 12h1v1h-1z" fill="#000"/>
<text x="325.6" y="610.6" textLength="47.5" lengthAdjust="spacingAndGlyphs" font-size="29" fill="#000" font-weight="normal"  stroke="#fff" stroke-width="0.4">Spill</text>
<text x="496.0" y="610.6" textLength="47.5" lengthAdjust="spacingAndGlyphs" font-size="29" fill="#000" font-weight="normal"  stroke="#fff" stroke-width="0.4">Spill</text>
<text x="667.9" y="610.6" textLength="53.0" lengthAdjust="spacingAndGlyphs" font-size="29" fill="#000" font-weight="normal"  stroke="#fff" stroke-width="0.4">Flow</text>
<text x="807.8" y="610.6" textLength="32.1" lengthAdjust="spacingAndGlyphs" font-size="29" fill="#000" font-weight="normal"  stroke="#fff" stroke-width="0.4">cfs</text>
<text x="954.5" y="610.6" textLength="14.0" lengthAdjust="spacingAndGlyphs" font-size="29" fill="#000" font-weight="normal"  stroke="#fff" stroke-width="0.4">1</text>
<text x="1048.0" y="610.6" textLength="50.2" lengthAdjust="spacingAndGlyphs" font-size="29" fill="#000" font-weight="normal"  stroke="#fff" stroke-width="0.4">NaN</text>
<text x="1117.4" y="610.6" textLength="50.2" lengthAdjust="spacingAndGlyphs" font-size="29" fill="#000" font-weight="normal"  stroke="#fff" stroke-width="0.4">NaN</text>
<text x="1194.0" y="610.6" textLength="55.8" lengthAdjust="spacingAndGlyphs" font-size="29" fill="#000" font-weight="normal"  stroke="#fff" stroke-width="0.4">Float</text>
<text x="1300.2" y="610.6" textLength="14.0" lengthAdjust="spacingAndGlyphs" font-size="29" fill="#000" font-weight="normal"  stroke="#fff" stroke-width="0.4">2</text>
<text x="1432.6" y="610.6" textLength="48.9" lengthAdjust="spacingAndGlyphs" font-size="29" fill="#000" font-weight="normal"  stroke="#fff" stroke-width="0.4">0.01</text>
<text x="1600.2" y="610.6" textLength="86.5" lengthAdjust="spacingAndGlyphs" font-size="29" fill="#000" font-weight="normal"  stroke="#fff" stroke-width="0.4">Percent</text>
<path transform="translate(86.8 706.1) scale(2.404)" d="M4 0h1v1h-1zM3 1h1v1h-1zM4 1h1v1h-1zM5 1h1v1h-1zM2 2h1v1h-1zM3 2h1v1h-1zM4 2h1v1h-1zM1 3h1v1h-1zM2 3h1v1h-1zM3 3h1v1h-1zM0 4h1v1h-1zM1 4h1v1h-1zM2 4h1v1h-1zM1 5h1v1h-1zM2 5h1v1h-1zM3 5h1v1h-1zM2 6h1v1h-1zM3 6h1v1h-1zM4 6h1v1h-1zM3 7h1v1h-1zM4 7h1v1h-1zM5 7h1v1h-1zM4 8h1v1h-1z" fill="#4d6185"/>
<path transform="translate(1681 706.1) scale(2.404)" d="M1 0h1v1h-1zM2 1h1v1h-1zM1 1h1v1h-1zM0 1h1v1h-1zM3 2h1v1h-1zM2 2h1v1h-1zM1 2h1v1h-1zM4 3h1v1h-1zM3 3h1v1h-1zM2 3h1v1h-1zM5 4h1v1h-1zM4 4h1v1h-1zM3 4h1v1h-1zM4 5h1v1h-1zM3 5h1v1h-1zM2 5h1v1h-1zM3 6h1v1h-1zM2 6h1v1h-1zM1 6h1v1h-1zM2 7h1v1h-1zM1 7h1v1h-1zM0 7h1v1h-1zM1 8h1v1h-1z" fill="#4d6185"/>
<path transform="translate(77.0 835.5) scale(2.404)" d="M3 5h1v3h-1zM4 6h1v3h-1zM5 7h1v3h-1zM6 6h1v3h-1zM7 5h1v3h-1zM8 4h1v3h-1zM9 3h1v3h-1z" fill="#21a121"/>
<text x="123.8" y="859.8" textLength="116.9" lengthAdjust="spacingAndGlyphs" font-size="29" fill="#000" font-weight="normal"  stroke="#ece9d8" stroke-width="0.4">User Units</text>
<text x="128.2" y="922.0" textLength="159.2" lengthAdjust="spacingAndGlyphs" font-size="29" fill="#000" font-weight="normal"  stroke="#ece9d8" stroke-width="0.4">For Unit Type:</text>
<path transform="translate(631.9 905.3) scale(2.404)" d="M0 1h1v1h-1zM1 1h1v1h-1zM2 1h1v1h-1zM6 1h1v1h-1zM7 1h1v1h-1zM8 1h1v1h-1zM1 2h1v1h-1zM2 2h1v1h-1zM3 2h1v1h-1zM5 2h1v1h-1zM6 2h1v1h-1zM7 2h1v1h-1zM2 3h1v1h-1zM3 3h1v1h-1zM4 3h1v1h-1zM5 3h1v1h-1zM6 3h1v1h-1zM3 4h1v1h-1zM4 4h1v1h-1zM5 4h1v1h-1zM4 5h1v1h-1zM1 0h1v1h-1z M7 0h1v1h-1z" fill="#4d6185"/>
<text x="314.7" y="922.0" textLength="53.0" lengthAdjust="spacingAndGlyphs" font-size="29" fill="#000" font-weight="normal"  stroke="#fff" stroke-width="0.4">Flow</text>
<text x="154.1" y="1010.8" textLength="124.2" lengthAdjust="spacingAndGlyphs" font-size="29" fill="#000" font-weight="normal"  stroke="#ece9d8" stroke-width="0.4">User Units:</text>
<path transform="translate(494.9 994.8) scale(2.404)" d="M0 1h1v1h-1zM1 1h1v1h-1zM2 1h1v1h-1zM6 1h1v1h-1zM7 1h1v1h-1zM8 1h1v1h-1zM1 2h1v1h-1zM2 2h1v1h-1zM3 2h1v1h-1zM5 2h1v1h-1zM6 2h1v1h-1zM7 2h1v1h-1zM2 3h1v1h-1zM3 3h1v1h-1zM4 3h1v1h-1zM5 3h1v1h-1zM6 3h1v1h-1zM3 4h1v1h-1zM4 4h1v1h-1zM5 4h1v1h-1zM4 5h1v1h-1zM1 0h1v1h-1z M7 0h1v1h-1z" fill="#4d6185"/>
<text x="305.7" y="1010.8" textLength="46.0" lengthAdjust="spacingAndGlyphs" font-size="29" fill="#000" font-weight="normal"  stroke="#fff" stroke-width="0.4">cms</text>
<text x="595.2" y="1010.8" textLength="72.5" lengthAdjust="spacingAndGlyphs" font-size="29" fill="#000" font-weight="normal"  stroke="#ece9d8" stroke-width="0.4">Scale:</text>
<text x="154.1" y="1068.4" textLength="119.6" lengthAdjust="spacingAndGlyphs" font-size="29" fill="#000" font-weight="normal"  stroke="#ece9d8" stroke-width="0.4">Min Value:</text>
<text x="541.2" y="1068.4" textLength="126.5" lengthAdjust="spacingAndGlyphs" font-size="29" fill="#000" font-weight="normal"  stroke="#ece9d8" stroke-width="0.4">Max Value:</text>
<path transform="translate(295.6 1102.5) scale(2.404)" d="M3 5h1v3h-1zM4 6h1v3h-1zM5 7h1v3h-1zM6 6h1v3h-1zM7 5h1v3h-1zM8 4h1v3h-1zM9 3h1v3h-1z" fill="#21a121"/>
<text x="342.0" y="1126.5" textLength="547.7" lengthAdjust="spacingAndGlyphs" font-size="29" fill="#000" font-weight="normal"  stroke="#ece9d8" stroke-width="0.4">Convert slot values to new User Units and Scale</text>
<path transform="translate(77.0 1191.0) scale(2.404)" d="M3 5h1v3h-1zM4 6h1v3h-1zM5 7h1v3h-1zM6 6h1v3h-1zM7 5h1v3h-1zM8 4h1v3h-1zM9 3h1v3h-1z" fill="#21a121"/>
<text x="123.6" y="1216.0" textLength="166.1" lengthAdjust="spacingAndGlyphs" font-size="29" fill="#000" font-weight="normal"  stroke="#ece9d8" stroke-width="0.4">Display Format</text>
<text x="155.8" y="1303.0" textLength="61.4" lengthAdjust="spacingAndGlyphs" font-size="29" fill="#000" font-weight="normal"  stroke="#ece9d8" stroke-width="0.4">Type:</text>
<path transform="translate(494.9 1284.8) scale(2.404)" d="M0 1h1v1h-1zM1 1h1v1h-1zM2 1h1v1h-1zM6 1h1v1h-1zM7 1h1v1h-1zM8 1h1v1h-1zM1 2h1v1h-1zM2 2h1v1h-1zM3 2h1v1h-1zM5 2h1v1h-1zM6 2h1v1h-1zM7 2h1v1h-1zM2 3h1v1h-1zM3 3h1v1h-1zM4 3h1v1h-1zM5 3h1v1h-1zM6 3h1v1h-1zM3 4h1v1h-1zM4 4h1v1h-1zM5 4h1v1h-1zM4 5h1v1h-1zM1 0h1v1h-1z M7 0h1v1h-1z" fill="#4d6185"/>
<text x="244.7" y="1303.0" textLength="55.8" lengthAdjust="spacingAndGlyphs" font-size="29" fill="#000" font-weight="normal"  stroke="#fff" stroke-width="0.4">Float</text>
<text x="541.5" y="1303.0" textLength="108.9" lengthAdjust="spacingAndGlyphs" font-size="29" fill="#000" font-weight="normal"  stroke="#ece9d8" stroke-width="0.4">Precision:</text>
<path transform="translate(886.1 1280.0) scale(2.404)" d="M3 0h1v1h-1zM2 1h1v1h-1zM3 1h1v1h-1zM4 1h1v1h-1zM1 2h1v1h-1zM2 2h1v1h-1zM3 2h1v1h-1zM4 2h1v1h-1zM5 2h1v1h-1zM0 3h1v1h-1zM1 3h1v1h-1zM2 3h1v1h-1zM4 3h1v1h-1zM5 3h1v1h-1zM6 3h1v1h-1z" fill="#4d6185"/>
<path transform="translate(886.1 1296.9) scale(2.404)" d="M3 3h1v1h-1zM2 2h1v1h-1zM3 2h1v1h-1zM4 2h1v1h-1zM1 1h1v1h-1zM2 1h1v1h-1zM3 1h1v1h-1zM4 1h1v1h-1zM5 1h1v1h-1zM0 0h1v1h-1zM1 0h1v1h-1zM2 0h1v1h-1zM4 0h1v1h-1zM5 0h1v1h-1zM6 0h1v1h-1z" fill="#4d6185"/>
<text x="671.2" y="1303.0" textLength="14.0" lengthAdjust="spacingAndGlyphs" font-size="29" fill="#000" font-weight="normal"  stroke="#fff" stroke-width="0.4">2</text>
<text x="1060.0" y="860.0" textLength="400.7" lengthAdjust="spacingAndGlyphs" font-size="29" fill="#000" font-weight="normal"  stroke="#ece9d8" stroke-width="0.4">Unit Type for Slots on Data Objects</text>
<text x="1127.5" y="946.5" textLength="161.7" lengthAdjust="spacingAndGlyphs" font-size="29" fill="#a5a292" font-weight="normal"  stroke="#ece9d8" stroke-width="0.4">Old Unit Type:</text>
<text x="1112.2" y="1004.2" textLength="177.0" lengthAdjust="spacingAndGlyphs" font-size="29" fill="#a5a292" font-weight="normal"  stroke="#ece9d8" stroke-width="0.4">New Unit Type:</text>
<text x="1105.2" y="1061.6" textLength="184.0" lengthAdjust="spacingAndGlyphs" font-size="29" fill="#a5a292" font-weight="normal"  stroke="#ece9d8" stroke-width="0.4">New User Units:</text>
<path transform="translate(1652.9 928.8) scale(2.404)" d="M0 1h1v1h-1zM1 1h1v1h-1zM2 1h1v1h-1zM6 1h1v1h-1zM7 1h1v1h-1zM8 1h1v1h-1zM1 2h1v1h-1zM2 2h1v1h-1zM3 2h1v1h-1zM5 2h1v1h-1zM6 2h1v1h-1zM7 2h1v1h-1zM2 3h1v1h-1zM3 3h1v1h-1zM4 3h1v1h-1zM5 3h1v1h-1zM6 3h1v1h-1zM3 4h1v1h-1zM4 4h1v1h-1zM5 4h1v1h-1zM4 5h1v1h-1zM1 0h1v1h-1z M7 0h1v1h-1z" fill="#c9c7ba"/>
<path transform="translate(1652.9 986.8) scale(2.404)" d="M0 1h1v1h-1zM1 1h1v1h-1zM2 1h1v1h-1zM6 1h1v1h-1zM7 1h1v1h-1zM8 1h1v1h-1zM1 2h1v1h-1zM2 2h1v1h-1zM3 2h1v1h-1zM5 2h1v1h-1zM6 2h1v1h-1zM7 2h1v1h-1zM2 3h1v1h-1zM3 3h1v1h-1zM4 3h1v1h-1zM5 3h1v1h-1zM6 3h1v1h-1zM3 4h1v1h-1zM4 4h1v1h-1zM5 4h1v1h-1zM4 5h1v1h-1zM1 0h1v1h-1z M7 0h1v1h-1z" fill="#c9c7ba"/>
<path transform="translate(1652.9 1043.8) scale(2.404)" d="M0 1h1v1h-1zM1 1h1v1h-1zM2 1h1v1h-1zM6 1h1v1h-1zM7 1h1v1h-1zM8 1h1v1h-1zM1 2h1v1h-1zM2 2h1v1h-1zM3 2h1v1h-1zM5 2h1v1h-1zM6 2h1v1h-1zM7 2h1v1h-1zM2 3h1v1h-1zM3 3h1v1h-1zM4 3h1v1h-1zM5 3h1v1h-1zM6 3h1v1h-1zM3 4h1v1h-1zM4 4h1v1h-1zM5 4h1v1h-1zM4 5h1v1h-1zM1 0h1v1h-1z M7 0h1v1h-1z" fill="#c9c7ba"/>
<text x="1316.2" y="946.5" textLength="53.0" lengthAdjust="spacingAndGlyphs" font-size="29" fill="#a5a292" font-weight="normal"  stroke="#fff" stroke-width="0.4">Flow</text>
<text x="1316.2" y="1004.2" textLength="72.6" lengthAdjust="spacingAndGlyphs" font-size="29" fill="#a5a292" font-weight="normal"  stroke="#fff" stroke-width="0.4">NONE</text>
<text x="1316.2" y="1061.6" textLength="72.6" lengthAdjust="spacingAndGlyphs" font-size="29" fill="#a5a292" font-weight="normal"  stroke="#fff" stroke-width="0.4">NONE</text>
<path transform="translate(1014.0 1121.5) scale(2.404)" d="M3 5h1v3h-1zM4 6h1v3h-1zM5 7h1v3h-1zM6 6h1v3h-1zM7 5h1v3h-1zM8 4h1v3h-1zM9 3h1v3h-1z" fill="#21a121"/>
<text x="1060.0" y="1144.3" textLength="154.1" lengthAdjust="spacingAndGlyphs" font-size="29" fill="#000" font-weight="normal"  stroke="#ece9d8" stroke-width="0.4">Convergence</text>
<text x="1089.5" y="1230.7" textLength="71.9" lengthAdjust="spacingAndGlyphs" font-size="29" fill="#000" font-weight="normal"  stroke="#ece9d8" stroke-width="0.4">Value:</text>
<text x="1181.2" y="1230.7" textLength="62.8" lengthAdjust="spacingAndGlyphs" font-size="29" fill="#000" font-weight="normal"  stroke="#fff" stroke-width="0.4">.0001</text>
<text x="1401.5" y="1230.7" textLength="62.2" lengthAdjust="spacingAndGlyphs" font-size="29" fill="#000" font-weight="normal"  stroke="#ece9d8" stroke-width="0.4">Type:</text>
<path transform="translate(1651.9 1214.8) scale(2.404)" d="M0 1h1v1h-1zM1 1h1v1h-1zM2 1h1v1h-1zM6 1h1v1h-1zM7 1h1v1h-1zM8 1h1v1h-1zM1 2h1v1h-1zM2 2h1v1h-1zM3 2h1v1h-1zM5 2h1v1h-1zM6 2h1v1h-1zM7 2h1v1h-1zM2 3h1v1h-1zM3 3h1v1h-1zM4 3h1v1h-1zM5 3h1v1h-1zM6 3h1v1h-1zM3 4h1v1h-1zM4 4h1v1h-1zM5 4h1v1h-1zM4 5h1v1h-1zM1 0h1v1h-1z M7 0h1v1h-1z" fill="#4d6185"/>
<text x="1492.2" y="1230.7" textLength="86.5" lengthAdjust="spacingAndGlyphs" font-size="29" fill="#000" font-weight="normal"  stroke="#fff" stroke-width="0.4">Percent</text>
<text x="408.2" y="1418.5" textLength="135.5" lengthAdjust="spacingAndGlyphs" font-size="29" fill="#000" font-weight="normal"  stroke="#f1f1ec" stroke-width="0.4">Apply To All</text>
<text x="734.2" y="1418.5" textLength="210.5" lengthAdjust="spacingAndGlyphs" font-size="29" fill="#000" font-weight="normal"  stroke="#f1f1ec" stroke-width="0.4">Apply To Selected</text>
<text x="1171.2" y="1418.5" textLength="61.5" lengthAdjust="spacingAndGlyphs" font-size="29" fill="#000" font-weight="normal"  stroke="#f1f1ec" stroke-width="0.4">Close</text>
</svg>
</div></body></html>
